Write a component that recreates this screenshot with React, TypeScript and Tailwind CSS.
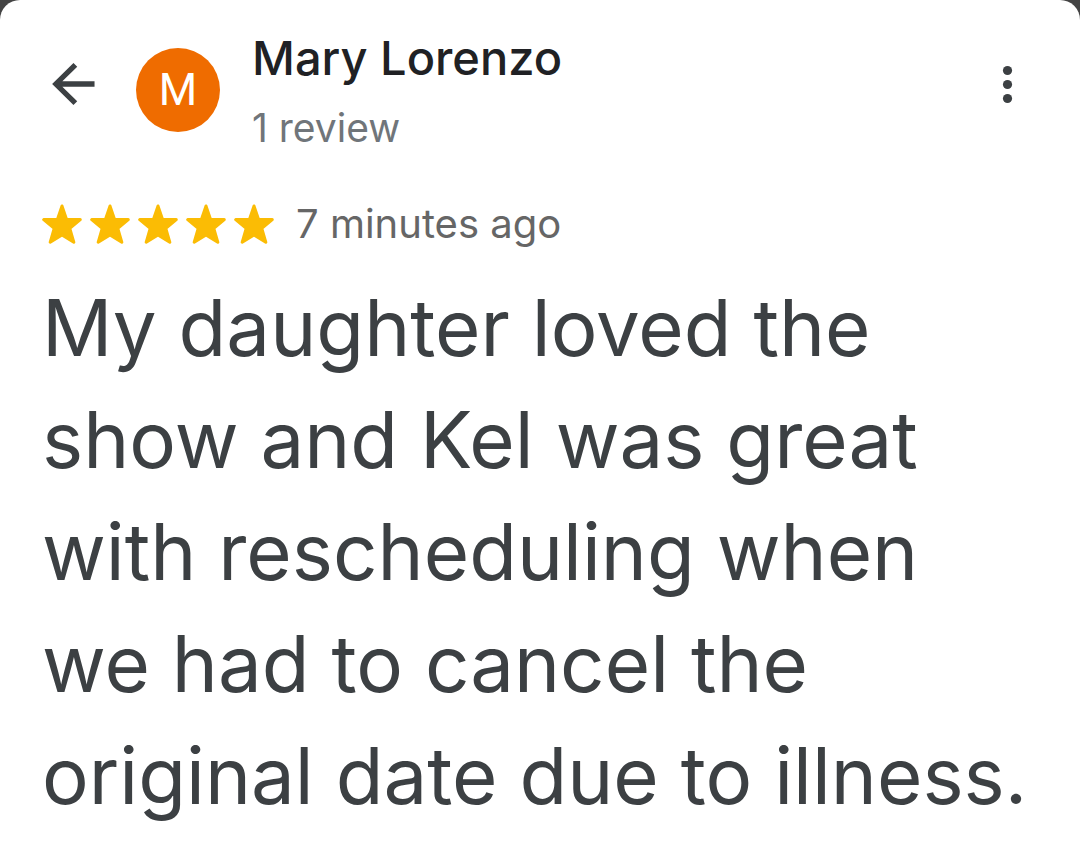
import React from 'react';

const Star = () => (
  <svg viewBox="4 -0.5 48 48" className="w-12 h-12" aria-hidden="true">
    <path
      d="M24 5.5L28.6 19.1H42.3L31.8 27.8L35.8 41.7L24 34.4L12.2 41.7L16.2 27.8L5.7 19.1H19.4Z"
      fill="#fbbc04"
      stroke="#fbbc04"
      strokeWidth="3"
      strokeLinejoin="round"
    />
  </svg>
);

const ReviewHeader = ({ name, count }: { name: string; count: string }) => (
  <header className="flex items-start">
    <button type="button" aria-label="Back" className="mt-5 w-16 h-16 text-[#3c4043]">
      <svg viewBox="0 0 24 24" fill="currentColor" className="w-16 h-16">
        <path d="M19.7 11H7.63l5.59-5.49L11.8 4.1l-8 7.9 8 7.9 1.41-1.41L7.63 13H19.7v-2z" />
      </svg>
    </button>
    <div className="mt-4 ml-[30px] w-21 h-21 shrink-0 rounded-full bg-[#ef6c00] flex items-center justify-center text-white text-[44px] font-['Roboto',sans-serif]">
      M
    </div>
    <div className="ml-8 grow">
      <h1 className="text-[47px] leading-[52px] font-medium text-[#202124]">{name}</h1>
      <p className="mt-4 text-[39px] leading-[56px] text-[#70757a]">{count}</p>
    </div>
    <button type="button" aria-label="More options" className="mt-5 w-16 h-16 text-[#3c4043]">
      <svg viewBox="0 0 64 64" fill="currentColor" className="w-16 h-16">
        <circle cx="31.5" cy="18.5" r="4.6" />
        <circle cx="31.5" cy="32.5" r="4.6" />
        <circle cx="31.5" cy="46.5" r="4.6" />
      </svg>
    </button>
  </header>
);

const App = () => {
  return (
    <div className="min-h-screen bg-[#444444] font-['Inter',sans-serif]">
      <main className="min-h-screen rounded-t-[20px] bg-white pt-8 pl-[42px] pr-10">
        <ReviewHeader name="Mary Lorenzo" count="1 review" />
        <div className="mt-11 flex items-center">
          <div className="flex" role="img" aria-label="5 stars">
            {[...Array(5)].map((_, i) => (
              <Star key={i} />
            ))}
          </div>
          <span className="ml-[14px] text-[40px] leading-[48px] text-[#666666]">7 minutes ago</span>
        </div>
        <p className="mt-6 text-[78px] leading-[112px] text-[#3c4043]">
          My daughter loved the show and Kel was great with rescheduling when we had to cancel the
          original date due to illness.
        </p>
      </main>
    </div>
  );
};

export default App;
